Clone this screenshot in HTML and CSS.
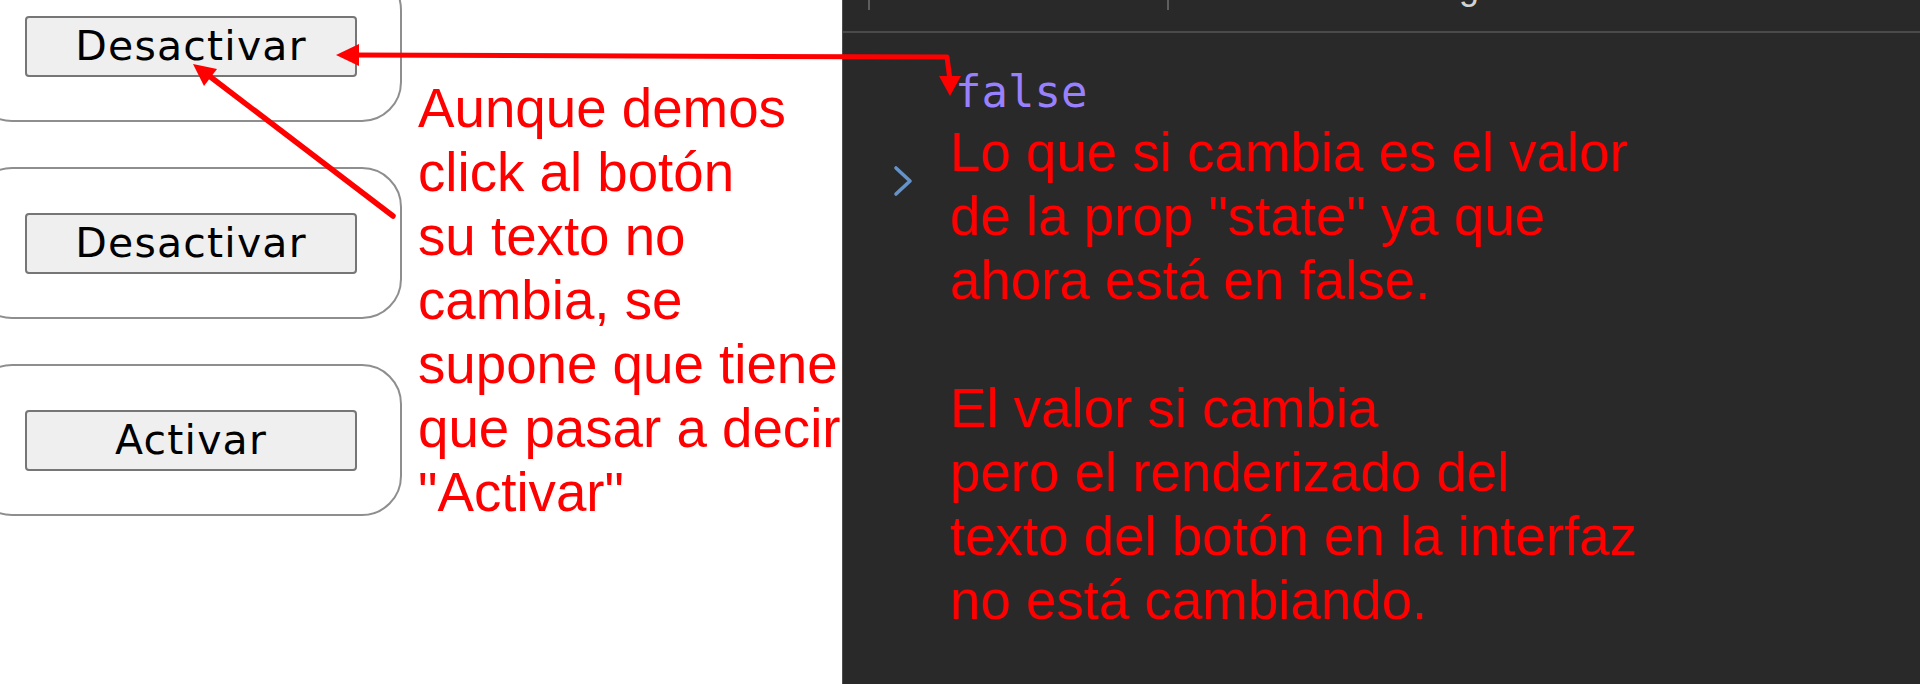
FILE: index.html
```html
<!DOCTYPE html>
<html lang="es">
<head>
<meta charset="utf-8">
<title>Estado del botón</title>
<link rel="stylesheet" href="styles.css">
</head>
<body>
<div class="page">
  <section class="app">
    <div class="cards">
      <div class="card"><button class="toggle">Desactivar</button></div>
      <div class="card"><button class="toggle">Desactivar</button></div>
      <div class="card"><button class="toggle">Activar</button></div>
    </div>
    <p class="note note-left">Aunque demos<br>click al botón<br>su texto no<br>cambia, se<br>supone que tiene<br>que pasar a decir<br>"Activar"</p>
  </section>
  <section class="devtools">
    <div class="tabbar">
      <span class="tab-sep"></span>
      <span class="tab tab-first"></span>
      <span class="tab-sep"></span>
      <span class="tab tab-second">Settings</span>
    </div>
    <div class="console">
      <div class="msg-false">false</div>
      <div class="prompt-row">
        <svg class="prompt" viewBox="0 0 20 32" aria-hidden="true"><polyline points="3,3 17,16 3,29" fill="none" stroke="#6492c9" stroke-width="3.6" stroke-linecap="round" stroke-linejoin="round"/></svg>
        <p class="note note-right">Lo que si cambia es el valor<br>de la prop "state" ya que<br>ahora está en false.<br><br>El valor si cambia<br>pero el renderizado del<br>texto del botón en la interfaz<br>no está cambiando.</p>
      </div>
    </div>
  </section>
  <svg class="arrows" viewBox="0 0 1920 684" aria-hidden="true">
    <polyline points="352,55 947,57 950,80" fill="none" stroke="#ff0000" stroke-width="5" stroke-linejoin="round"/>
    <polygon points="336,55 359,44 359,66" fill="#ff0000"/>
    <polygon points="950,96 939,76 961,76" fill="#ff0000"/>
    <line x1="208" y1="75" x2="393" y2="216" stroke="#ff0000" stroke-width="5.5" stroke-linecap="round"/>
    <polygon points="193,64 217,69 204,86" fill="#ff0000"/>
  </svg>
</div>
</body>
</html>
```
FILE: styles.css
```css
html, body {
  margin: 0;
  padding: 0;
  width: 1920px;
  height: 684px;
  overflow: hidden;
  background: #ffffff;
}

.page {
  position: relative;
  display: flex;
  width: 1920px;
  height: 684px;
}

.app {
  flex: none;
  width: 842px;
  display: flex;
  align-items: flex-start;
  overflow: hidden;
  background: #ffffff;
}

.cards {
  flex: none;
  display: flex;
  flex-direction: column;
  gap: 45px;
  margin-top: -30px;
  margin-left: -28px;
}

.card {
  box-sizing: border-box;
  width: 430px;
  height: 152px;
  border: 2px solid #8e8e8e;
  border-radius: 40px;
  display: flex;
  align-items: center;
  padding-left: 51px;
}

.toggle {
  box-sizing: border-box;
  width: 332px;
  height: 61px;
  padding: 0;
  background: #efefef;
  border: 2px solid #767676;
  border-radius: 4px;
  color: #000000;
  font-family: "DejaVu Sans", sans-serif;
  font-size: 41px;
  letter-spacing: 1.2px;
  line-height: 1;
}

.note {
  margin: 0;
  color: #ff0000;
  font-family: "Liberation Sans", Arial, sans-serif;
  font-size: 54.7px;
  line-height: 64px;
  white-space: nowrap;
}

.note-left {
  margin-top: 76px;
  margin-left: 16px;
}

.devtools {
  flex: 1;
  display: flex;
  flex-direction: column;
  background: #292929;
  border-left: 1px solid #4d4d4d;
  overflow: hidden;
}

.tabbar {
  flex: none;
  height: 31px;
  display: flex;
  align-items: flex-start;
  padding-left: 25px;
  border-bottom: 2px solid #4a4a4a;
  overflow: hidden;
}

.tab-sep {
  flex: none;
  width: 2px;
  height: 10px;
  background: #5e5e5e;
}

.tab-first {
  width: 297px;
}

.tab-second {
  margin-left: 198px;
  margin-top: -31px;
  font-family: "Liberation Sans", Arial, sans-serif;
  font-size: 36px;
  line-height: 36px;
  color: #d2d2d2;
  white-space: nowrap;
}

.console {
  padding-left: 50px;
}

.msg-false {
  margin-top: 33px;
  margin-left: 62px;
  font-family: "DejaVu Sans Mono", monospace;
  font-size: 44px;
  line-height: 52px;
  color: #9980ff;
}

.prompt-row {
  display: flex;
  align-items: flex-start;
  margin-top: 2px;
}

.prompt {
  flex: none;
  width: 20px;
  height: 32px;
  margin-top: 45px;
}

.note-right {
  margin-left: 37px;
}

.arrows {
  position: absolute;
  left: 0;
  top: 0;
  width: 1920px;
  height: 684px;
  pointer-events: none;
}
```
